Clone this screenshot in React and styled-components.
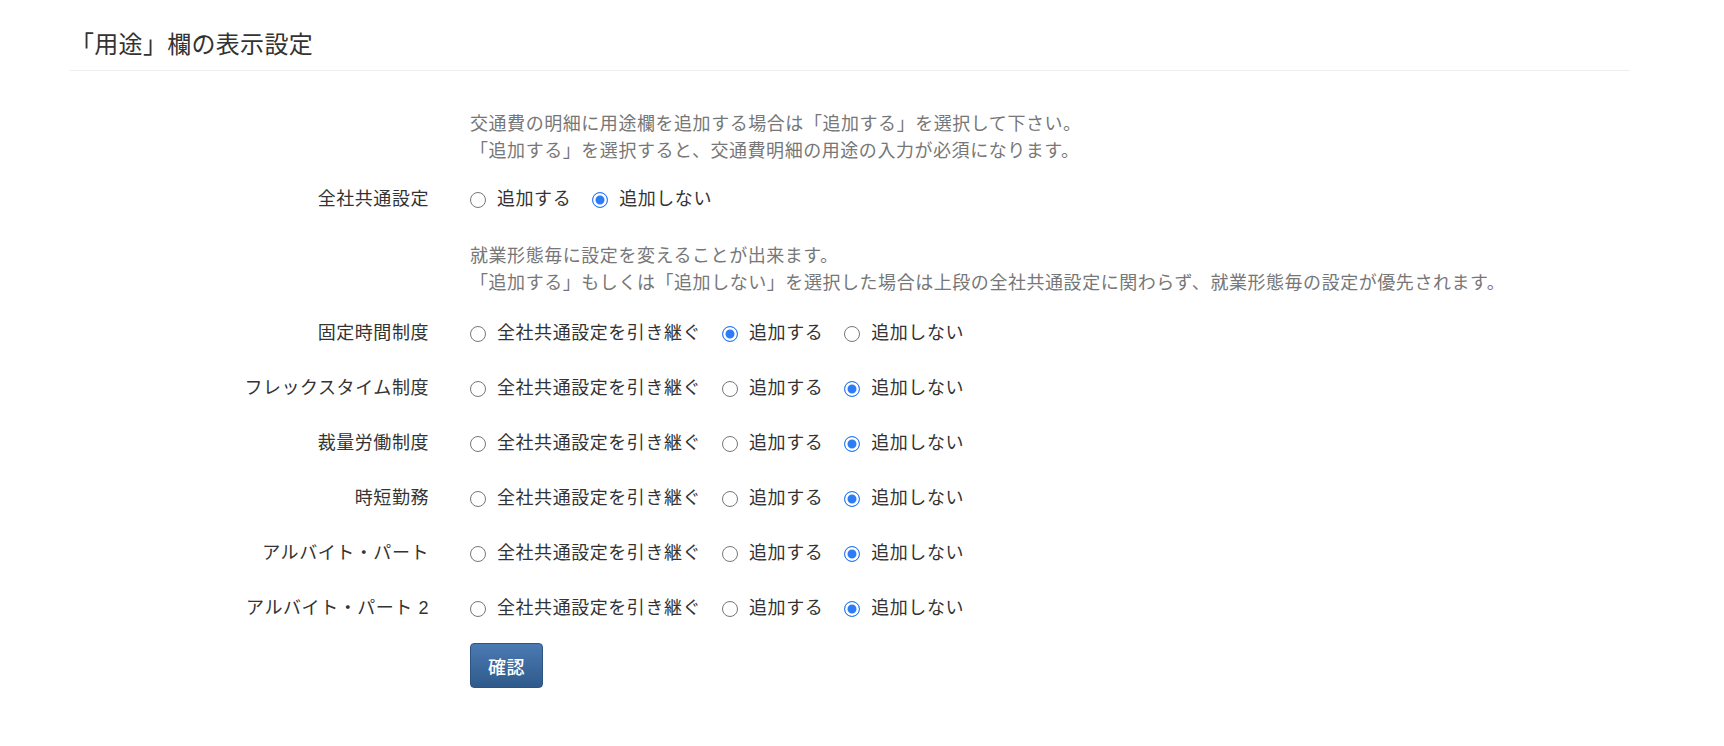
import { useState } from 'react';
import styled, { createGlobalStyle } from 'styled-components';

const GlobalStyle = createGlobalStyle`
  body {
    margin: 0;
    background: #fff;
    font-family: "Liberation Sans", "Noto Sans CJK JP", sans-serif;
    color: #333;
  }
`;

const Page = styled.div`
  width: 1560px;
  margin-left: 70px;
  padding-bottom: 40px;
`;

const Header = styled.div`
  padding-top: 28px;
  padding-bottom: 8px;
  border-bottom: 1px solid #eee;
`;

const Title = styled.h3`
  margin: 0;
  font-size: 24px;
  line-height: 34px;
  font-weight: 400;
  letter-spacing: 0.3px;
  color: #333;
`;

const FormRow = styled.div`
  display: grid;
  grid-template-columns: 359px 1fr;
  column-gap: 41px;
  margin-top: ${(p) => p.$top}px;
  font-size: 18px;
  line-height: 27px;
  letter-spacing: 0.55px;
`;

const Label = styled.div`
  text-align: right;
  color: #333;
  white-space: nowrap;
`;

const Hint = styled.p`
  margin: 0;
  color: #777;
  white-space: nowrap;
`;

const Options = styled.div`
  display: flex;
  align-items: center;
  gap: 21px;
`;

const Option = styled.label`
  display: flex;
  align-items: center;
  gap: 11px;
  cursor: pointer;
  color: #333;
  white-space: nowrap;
`;

const Radio = styled.input`
  appearance: none;
  box-sizing: border-box;
  width: 16px;
  height: 16px;
  margin: 0;
  border: 1.5px solid #777;
  border-radius: 50%;
  background: #fff;
  cursor: pointer;

  &:checked {
    border: 1.5px solid #2c7cf6;
    background: #2c7cf6;
    box-shadow: inset 0 0 0 2.5px #fff;
  }
`;

const SubmitButton = styled.button`
  width: 73px;
  height: 45px;
  padding: 0;
  border: 1px solid #2e5582;
  border-radius: 4px;
  background: linear-gradient(to bottom, #4b7ab3 0%, #2f5a8b 100%);
  color: #fff;
  font-family: inherit;
  font-size: 18px;
  font-weight: 500;
  letter-spacing: 0.5px;
  cursor: pointer;
`;

const INHERIT = '全社共通設定を引き継ぐ';
const ADD = '追加する';
const NO_ADD = '追加しない';

const workStyles = [
  { name: '固定時間制度', value: ADD },
  { name: 'フレックスタイム制度', value: NO_ADD },
  { name: '裁量労働制度', value: NO_ADD },
  { name: '時短勤務', value: NO_ADD },
  { name: 'アルバイト・パート', value: NO_ADD },
  { name: 'アルバイト・パート 2', value: NO_ADD },
];

const RadioGroup = ({ name, choices, value, onChange }) => (
  <Options>
    {choices.map((c) => (
      <Option key={c}>
        <Radio type="radio" name={name} checked={value === c} onChange={() => onChange(c)} />
        {c}
      </Option>
    ))}
  </Options>
);

const App = () => {
  const [common, setCommon] = useState(NO_ADD);
  const [styles, setStyles] = useState(workStyles.map((w) => w.value));

  const updateStyle = (i, v) => {
    const next = [...styles];
    next[i] = v;
    setStyles(next);
  };

  return (
    <>
      <GlobalStyle />
      <Page>
        <Header>
          <Title>「用途」欄の表示設定</Title>
        </Header>

        <FormRow $top={40}>
          <Label />
          <div>
            <Hint>交通費の明細に用途欄を追加する場合は「追加する」を選択して下さい。</Hint>
            <Hint>「追加する」を選択すると、交通費明細の用途の入力が必須になります。</Hint>
          </div>
        </FormRow>

        <FormRow $top={21}>
          <Label>全社共通設定</Label>
          <RadioGroup name="common" choices={[ADD, NO_ADD]} value={common} onChange={setCommon} />
        </FormRow>

        <FormRow $top={30}>
          <Label />
          <div>
            <Hint>就業形態毎に設定を変えることが出来ます。</Hint>
            <Hint>
              「追加する」もしくは「追加しない」を選択した場合は上段の全社共通設定に関わらず、就業形態毎の設定が優先されます。
            </Hint>
          </div>
        </FormRow>

        {workStyles.map((w, i) => (
          <FormRow key={w.name} $top={i === 0 ? 23 : 28}>
            <Label>{w.name}</Label>
            <RadioGroup
              name={`style-${i}`}
              choices={[INHERIT, ADD, NO_ADD]}
              value={styles[i]}
              onChange={(v) => updateStyle(i, v)}
            />
          </FormRow>
        ))}

        <FormRow $top={21}>
          <Label />
          <div>
            <SubmitButton type="button">確認</SubmitButton>
          </div>
        </FormRow>
      </Page>
    </>
  );
};

export default App;
